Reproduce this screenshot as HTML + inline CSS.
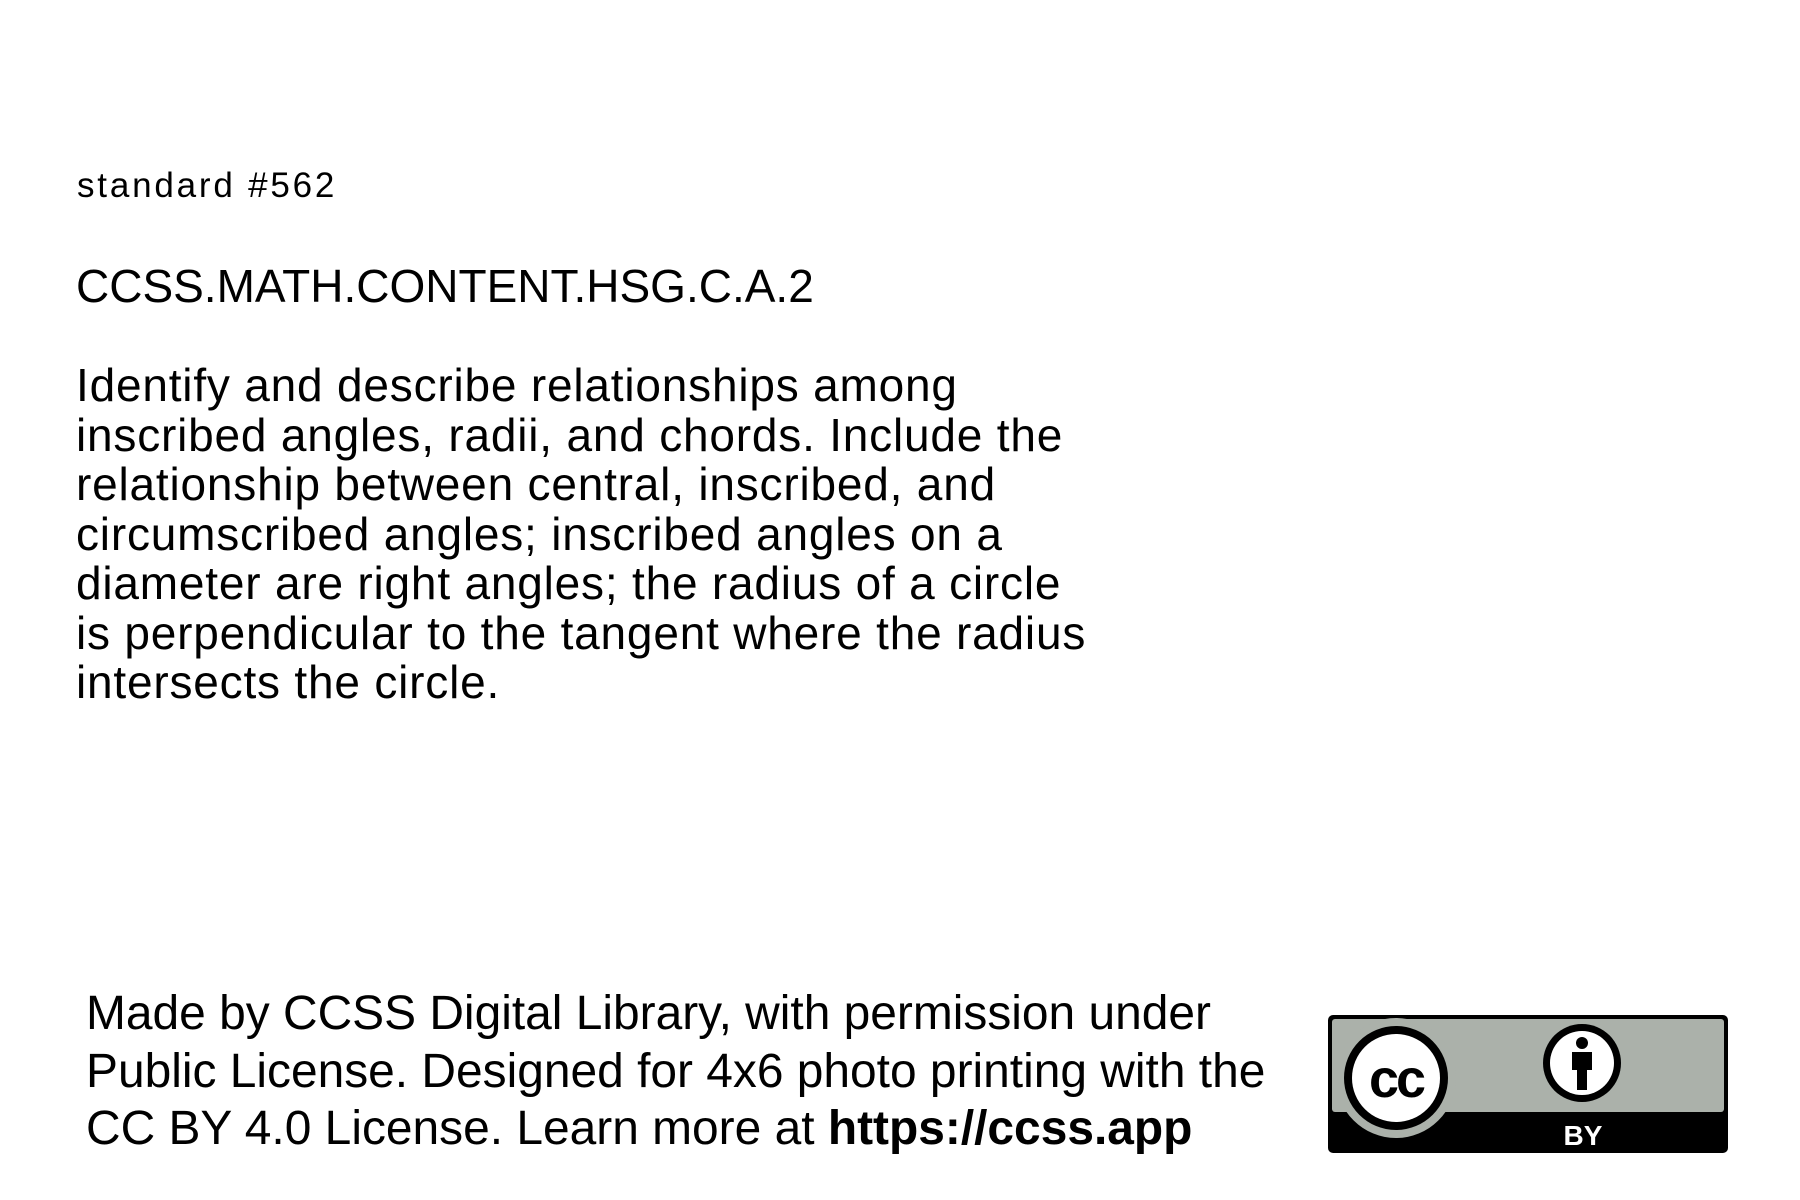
<!DOCTYPE html>
<html><head><meta charset="utf-8"><style>
body{margin:0;width:1800px;height:1200px;background:#fff;position:relative;overflow:hidden}
.t{position:absolute;white-space:nowrap;color:#000}
.s{font-family:"Liberation Sans",sans-serif}
</style></head><body>
<div class="t s" style="left:77px;top:166px;font-size:35px;letter-spacing:2.8px">standard #562</div>
<div class="t s" style="left:76px;top:259px;font-size:46px;letter-spacing:0px">CCSS.MATH.CONTENT.HSG.C.A.2</div>
<div class="t s" style="left:76px;top:361px;font-size:46px;line-height:49.5px;letter-spacing:0.8px">Identify and describe relationships among<br>inscribed angles, radii, and chords. Include the<br>relationship between central, inscribed, and<br>circumscribed angles; inscribed angles on a<br>diameter are right angles; the radius of a circle<br>is perpendicular to the tangent where the radius<br>intersects the circle.</div>
<div class="t s" style="left:86px;top:985px;font-size:47.9px;line-height:57.5px">Made by CCSS Digital Library, with permission under<br>Public License. Designed for 4x6 photo printing with the<br>CC BY 4.0 License. Learn more at <b>https://ccss.app</b></div>
<svg style="position:absolute;left:0;top:0" width="1800" height="1200">
<rect x="1328" y="1015" width="400" height="138" rx="5" fill="#000"/>
<rect x="1332" y="1019" width="392" height="93" rx="3" fill="#abb1aa"/>
<circle cx="1396" cy="1078" r="60" fill="#abb1aa"/>
<circle cx="1396" cy="1078" r="52" fill="#000"/>
<circle cx="1396" cy="1078" r="44" fill="#fff"/>
<text x="1396" y="1097" text-anchor="middle" font-family="Liberation Sans" font-weight="bold" font-size="54" letter-spacing="-3">cc</text>
<circle cx="1582" cy="1063" r="39" fill="#000"/>
<circle cx="1582" cy="1063" r="32" fill="#fff"/>
<circle cx="1582" cy="1043" r="6" fill="#000"/>
<path d="M1572 1052h20v18h-5v20h-10v-20h-5z" fill="#000"/>
<text x="1583" y="1145" text-anchor="middle" font-family="Liberation Sans" font-weight="bold" font-size="28" fill="#fff">BY</text>
</svg>
</body></html>
